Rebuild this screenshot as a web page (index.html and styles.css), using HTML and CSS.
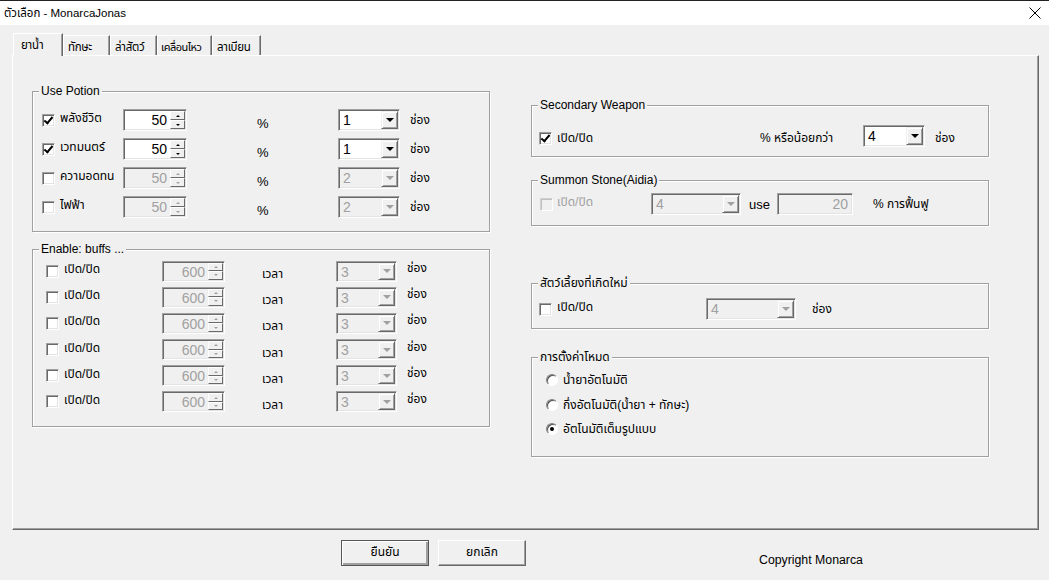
FILE: index.html
```html
<!DOCTYPE html>
<html lang="th">
<head>
    <meta charset="UTF-8">
    <title>ตัวเลือก - MonarcaJonas</title>
    <link rel="stylesheet" href="styles.css">
</head>
<body>
    <div class="titlebar">
        <span class="title">ตัวเลือก - MonarcaJonas</span>
        <svg class="close" width="12" height="12" viewBox="0 0 12 12"><path d="M0.5 0.5L11.5 11.5M11.5 0.5L0.5 11.5" stroke="#000" stroke-width="1" fill="none"/></svg>
    </div>

    <div class="tabs">
        <span class="tab active t1">ยาน้ำ</span>
        <span class="tab t2">ทักษะ</span>
        <span class="tab t3">ล่าสัตว์</span>
        <span class="tab t4">เคลื่อนไหว</span>
        <span class="tab t5">ลาเบียน</span>
    </div>

    <div class="panel">
        <div class="col left">
            <!-- Use Potion -->
            <div class="group potion">
                <span class="legend">Use Potion</span>
                <div class="row">
                    <span class="check on"></span><span class="lbl">พลังชีวิต</span>
                    <span class="spin"><span class="val">50</span><span class="btns"><i class="up"></i><i class="down"></i></span></span>
                    <span class="pct">%</span>
                    <span class="combo"><span class="val">1</span><span class="drop"></span></span>
                    <span class="unit">ช่อง</span>
                </div>
                <div class="row">
                    <span class="check on"></span><span class="lbl">เวทมนตร์</span>
                    <span class="spin"><span class="val">50</span><span class="btns"><i class="up"></i><i class="down"></i></span></span>
                    <span class="pct">%</span>
                    <span class="combo"><span class="val">1</span><span class="drop"></span></span>
                    <span class="unit">ช่อง</span>
                </div>
                <div class="row">
                    <span class="check"></span><span class="lbl">ความอดทน</span>
                    <span class="spin off"><span class="val">50</span><span class="btns"><i class="up"></i><i class="down"></i></span></span>
                    <span class="pct">%</span>
                    <span class="combo off"><span class="val">2</span><span class="drop"></span></span>
                    <span class="unit">ช่อง</span>
                </div>
                <div class="row">
                    <span class="check"></span><span class="lbl">ไฟฟ้า</span>
                    <span class="spin off"><span class="val">50</span><span class="btns"><i class="up"></i><i class="down"></i></span></span>
                    <span class="pct">%</span>
                    <span class="combo off"><span class="val">2</span><span class="drop"></span></span>
                    <span class="unit">ช่อง</span>
                </div>
            </div>

            <!-- Enable: buffs -->
            <div class="group buffs">
                <span class="legend">Enable: buffs ...</span>
                <div class="row">
                    <span class="check"></span><span class="lbl">เปิด/ปิด</span>
                    <span class="spin off"><span class="val">600</span><span class="btns"><i class="up"></i><i class="down"></i></span></span>
                    <span class="time">เวลา</span>
                    <span class="combo off"><span class="val">3</span><span class="drop"></span></span>
                    <span class="unit">ช่อง</span>
                </div>
                <div class="row">
                    <span class="check"></span><span class="lbl">เปิด/ปิด</span>
                    <span class="spin off"><span class="val">600</span><span class="btns"><i class="up"></i><i class="down"></i></span></span>
                    <span class="time">เวลา</span>
                    <span class="combo off"><span class="val">3</span><span class="drop"></span></span>
                    <span class="unit">ช่อง</span>
                </div>
                <div class="row">
                    <span class="check"></span><span class="lbl">เปิด/ปิด</span>
                    <span class="spin off"><span class="val">600</span><span class="btns"><i class="up"></i><i class="down"></i></span></span>
                    <span class="time">เวลา</span>
                    <span class="combo off"><span class="val">3</span><span class="drop"></span></span>
                    <span class="unit">ช่อง</span>
                </div>
                <div class="row">
                    <span class="check"></span><span class="lbl">เปิด/ปิด</span>
                    <span class="spin off"><span class="val">600</span><span class="btns"><i class="up"></i><i class="down"></i></span></span>
                    <span class="time">เวลา</span>
                    <span class="combo off"><span class="val">3</span><span class="drop"></span></span>
                    <span class="unit">ช่อง</span>
                </div>
                <div class="row">
                    <span class="check"></span><span class="lbl">เปิด/ปิด</span>
                    <span class="spin off"><span class="val">600</span><span class="btns"><i class="up"></i><i class="down"></i></span></span>
                    <span class="time">เวลา</span>
                    <span class="combo off"><span class="val">3</span><span class="drop"></span></span>
                    <span class="unit">ช่อง</span>
                </div>
                <div class="row">
                    <span class="check"></span><span class="lbl">เปิด/ปิด</span>
                    <span class="spin off"><span class="val">600</span><span class="btns"><i class="up"></i><i class="down"></i></span></span>
                    <span class="time">เวลา</span>
                    <span class="combo off"><span class="val">3</span><span class="drop"></span></span>
                    <span class="unit">ช่อง</span>
                </div>
            </div>
        </div>

        <div class="col right">
            <!-- Secondary Weapon -->
            <div class="group weapon">
                <span class="legend">Secondary Weapon</span>
                <div class="row">
                    <span class="check on"></span><span class="lbl">เปิด/ปิด</span>
                    <span class="less">% หรือน้อยกว่า</span>
                    <span class="combo"><span class="val">4</span><span class="drop"></span></span>
                    <span class="unit">ช่อง</span>
                </div>
            </div>

            <!-- Summon Stone -->
            <div class="group stone">
                <span class="legend">Summon Stone(Aidia)</span>
                <div class="row">
                    <span class="check dis"></span><span class="lbl grey">เปิด/ปิด</span>
                    <span class="combo off"><span class="val">4</span><span class="drop"></span></span>
                    <span class="use">use</span>
                    <span class="edit off">20</span>
                    <span class="regen">% การฟื้นฟู</span>
                </div>
            </div>

            <!-- Pet -->
            <div class="group pet">
                <span class="legend">สัตว์เลี้ยงที่เกิดใหม่</span>
                <div class="row">
                    <span class="check"></span><span class="lbl">เปิด/ปิด</span>
                    <span class="combo off"><span class="val">4</span><span class="drop"></span></span>
                    <span class="unit">ช่อง</span>
                </div>
            </div>

            <!-- Mode -->
            <div class="group mode">
                <span class="legend">การตั้งค่าโหมด</span>
                <div class="opt"><span class="radio"></span><span>น้ำยาอัตโนมัติ</span></div>
                <div class="opt"><span class="radio"></span><span>กึ่งอัตโนมัติ(น้ำยา + ทักษะ)</span></div>
                <div class="opt"><span class="radio on"></span><span>อัตโนมัติเต็มรูปแบบ</span></div>
            </div>
        </div>
    </div>

    <div class="footer">
        <span class="btn default">ยืนยัน</span>
        <span class="btn">ยกเลิก</span>
        <span class="copy">Copyright Monarca</span>
    </div>
</body>
</html>
```

FILE: styles.css
```css
*{
    box-sizing: border-box;
}
body{
    margin: 0;
    width: 1049px;
    height: 580px;
    overflow: hidden;
    background: #f0f0f0;
    color: #000;
    font-family: "Liberation Sans", "Noto Sans Thai", "Noto Sans", sans-serif;
    font-size: 12px;
}

/* title bar */
.titlebar{
    height: 25px;
    background: #fff;
    border-top: 1px solid #222;
    display: flex;
    align-items: center;
    justify-content: space-between;
    padding: 0 8px 0 4px;
}
.title{
    font-size: 11.5px;
}

/* tabs */
.tabs{
    display: flex;
    align-items: flex-end;
    height: 22px;
    margin-top: 8px;
    padding-left: 13px;
}
.tab{
    height: 20px;
    padding: 3px 0 0 4px;
    border-top: 1px solid #fff;
    border-left: 1px solid #fff;
    border-right: 1px solid #696969;
    box-shadow: inset -1px 0 0 #a0a0a0;
    font-size: 11.5px;
    letter-spacing: -0.3px;
    white-space: nowrap;
    overflow: hidden;
}
.tab.active{
    height: 23px;
    margin-bottom: -1px;
    padding: 3px 0 0 7px;
    background: #f0f0f0;
    position: relative;
    z-index: 1;
}
.t1{ width: 50px; }
.t2{ width: 47px; }
.t3{ width: 47px; }
.t4{ width: 55px; padding-left: 3px; font-size: 11px; letter-spacing: -0.5px; }
.t5{ width: 49px; }

/* panel */
.panel{
    width: 1027px;
    height: 475px;
    margin-left: 12px;
    border-top: 1px solid #fff;
    border-left: 1px solid #fff;
    border-right: 1px solid #696969;
    border-bottom: 1px solid #696969;
    box-shadow: inset -1px -1px 0 #a0a0a0;
    display: flex;
    padding-left: 19px;
}
.col{
    width: 458px;
    display: flex;
    flex-direction: column;
}
.col.left{
    padding-top: 35px;
}
.col.right{
    margin-left: 41px;
    padding-top: 49px;
}

/* group box */
.group{
    position: relative;
    border: 1px solid #a0a0a0;
    box-shadow: 1px 1px 0 #fff, inset 1px 1px 0 #fff;
}
.legend{
    position: absolute;
    top: -8px;
    left: 6px;
    padding: 0 2px;
    background: #f0f0f0;
    font-size: 12px;
    line-height: 15px;
    white-space: nowrap;
}
.row{
    display: grid;
    align-items: center;
    white-space: nowrap;
}

.potion{
    height: 141px;
    padding: 17px 0 0 9px;
}
.potion .row{
    grid-template-columns: 18px 63px 134px 81px 72px auto;
    height: 22px;
    margin-bottom: 7px;
}
.buffs{
    height: 178px;
    margin-top: 17px;
    padding: 9px 0 0 13px;
}
.buffs .row{
    grid-template-columns: 18px 98px 100px 74px 71px auto;
    height: 21px;
    margin-bottom: 5.2px;
}
.weapon{
    height: 52px;
    padding: 18px 0 0 7px;
}
.weapon .row{
    grid-template-columns: 18px 203px 103px 72px auto;
    height: 22px;
}
.stone{
    height: 46px;
    margin-top: 23px;
    padding: 12px 0 0 8px;
}
.stone .row{
    grid-template-columns: 17px 94px 98px 28px 96px auto;
    height: 21px;
}
.pet{
    height: 46px;
    margin-top: 57px;
    padding: 14px 0 0 7px;
}
.pet .row{
    grid-template-columns: 18px 149px 106px auto;
    height: 22px;
}
.mode{
    height: 100px;
    margin-top: 28px;
    padding: 12px 0 0 14px;
}

/* text bits */
.lbl, .unit, .time, .less, .regen{
    font-size: 12px;
}
.lbl{
    margin-bottom: 4px;
}
.pct{
    font-size: 13px;
    margin-top: 6px;
}
.time{
    margin-top: 6px;
}
.buffs .unit{
    margin-bottom: 6px;
}
.weapon .check{
    margin-top: 5px;
}
.weapon .lbl{
    margin: 5px 0 0 0;
}
.weapon .less, .weapon .unit{
    margin-top: 4px;
}
.use{
    font-size: 13px;
}
.grey{
    color: #a0a0a0;
}

/* checkbox */
.check{
    width: 13px;
    height: 13px;
    background: #fff;
    border: 1px solid;
    border-color: #a0a0a0 #fff #fff #a0a0a0;
    box-shadow: inset 1px 1px 0 #696969, inset -1px -1px 0 #e3e3e3;
    position: relative;
}
.check.on::after{
    content: "";
    position: absolute;
    left: 3px;
    top: 0px;
    width: 3px;
    height: 7px;
    border: solid #000;
    border-width: 0 2px 2px 0;
    transform: rotate(40deg);
}
.check.dis{
    background: #f0f0f0;
    border-color: #d0d0d0 #fff #fff #d0d0d0;
    box-shadow: inset 1px 1px 0 #c0c0c0;
}

/* radio */
.opt{
    display: flex;
    align-items: center;
    height: 20px;
    margin-bottom: 4.5px;
    font-size: 12px;
}
.radio{
    width: 12px;
    height: 12px;
    border-radius: 50%;
    background: #fff;
    border: 1px solid;
    border-color: #808080 #fff #fff #808080;
    box-shadow: inset 1px 1px 0 #505050;
    margin-right: 5px;
    display: flex;
    align-items: center;
    justify-content: center;
}
.radio.on::after{
    content: "";
    width: 4px;
    height: 4px;
    border-radius: 50%;
    background: #000;
}

/* spin box */
.spin, .combo, .edit{
    display: flex;
    height: 22px;
    border: 1px solid;
    border-color: #a0a0a0 #fff #fff #a0a0a0;
    box-shadow: inset 1px 1px 0 #696969, inset -1px -1px 0 #e3e3e3;
    background: #fff;
}
.spin{
    width: 64px;
}
.buffs .spin{
    width: 63px;
    height: 21px;
}
.spin .val{
    flex: 1;
    text-align: right;
    padding: 1px 3px 0 0;
    font-size: 14px;
    line-height: 18px;
}
.btns{
    width: 16px;
    display: flex;
    flex-direction: column;
    padding: 1px 1px 1px 0;
}
.btns i{
    flex: 1;
    border: 1px solid;
    border-color: #fff #696969 #696969 #fff;
    background: #f0f0f0;
    display: flex;
    align-items: center;
    justify-content: center;
}
.btns i::after{
    content: "";
    border-left: 2px solid transparent;
    border-right: 2px solid transparent;
}
.btns .up::after{
    border-bottom: 2px solid #000;
}
.btns .down::after{
    border-top: 2px solid #000;
}
.off .btns .up::after{
    border-bottom-color: #a0a0a0;
}
.off .btns .down::after{
    border-top-color: #a0a0a0;
}
.off{
    background: #f0f0f0;
    color: #a0a0a0;
}

/* combo */
.combo{
    width: 62px;
}
.buffs .combo{
    width: 61px;
    height: 21px;
}
.stone .combo, .pet .combo{
    width: 90px;
}
.combo .val{
    flex: 1;
    padding: 1px 0 0 4px;
    font-size: 14px;
    line-height: 18px;
}
.drop{
    width: 17px;
    margin: 1px 1px 1px 0;
    border: 1px solid;
    border-color: #f0f0f0 #696969 #696969 #f0f0f0;
    box-shadow: inset 1px 1px 0 #fff, inset -1px -1px 0 #a0a0a0;
    background: #f0f0f0;
    display: flex;
    align-items: center;
    justify-content: center;
}
.drop::after{
    content: "";
    border-left: 4px solid transparent;
    border-right: 4px solid transparent;
    border-top: 4px solid #000;
}
.off .drop::after{
    border-top-color: #a0a0a0;
}

/* plain edit */
.edit{
    width: 76px;
    justify-content: flex-end;
    align-items: center;
    padding-right: 4px;
    font-size: 14px;
}

/* footer */
.footer{
    display: flex;
    padding-left: 341px;
    margin-top: 10px;
}
.btn{
    width: 88px;
    height: 26px;
    margin-right: 9px;
    display: flex;
    align-items: center;
    justify-content: center;
    padding-bottom: 3px;
    border: 1px solid;
    border-color: #fff #696969 #696969 #fff;
    box-shadow: inset -1px -1px 0 #a0a0a0;
    font-size: 12px;
}
.btn.default{
    border: 1px solid #555;
    box-shadow: inset 1px 1px 0 #fff, inset -2px -2px 0 #a0a0a0;
}
.copy{
    margin: 13px 0 0 224px;
    font-size: 12.3px;
    line-height: 14px;
}
```
